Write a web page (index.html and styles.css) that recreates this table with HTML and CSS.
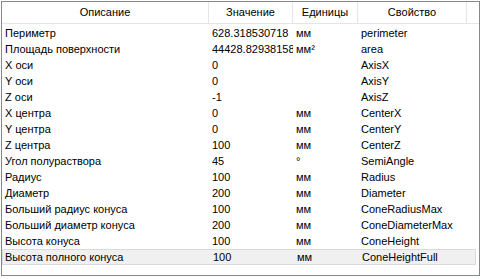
FILE: index.html
```html
<!DOCTYPE html>
<html>
<head>
<meta charset="utf-8">
<link rel="stylesheet" href="styles.css">
</head>
<body>
<div class="frame">
  <div class="head">
    <div class="hc">Описание</div>
    <div class="hc">Значение</div>
    <div class="hc">Единицы</div>
    <div class="hc">Свойство</div>
    <div class="hc filler"></div>
  </div>
  <div class="rows">
    <div class="row"><div class="c">Периметр</div><div class="c">628.318530718</div><div class="c">мм</div><div class="c">perimeter</div></div>
    <div class="row"><div class="c">Площадь поверхности</div><div class="c">44428.82938158</div><div class="c">мм²</div><div class="c">area</div></div>
    <div class="row"><div class="c">X оси</div><div class="c">0</div><div class="c"></div><div class="c">AxisX</div></div>
    <div class="row"><div class="c">Y оси</div><div class="c">0</div><div class="c"></div><div class="c">AxisY</div></div>
    <div class="row"><div class="c">Z оси</div><div class="c">-1</div><div class="c"></div><div class="c">AxisZ</div></div>
    <div class="row"><div class="c">X центра</div><div class="c">0</div><div class="c">мм</div><div class="c">CenterX</div></div>
    <div class="row"><div class="c">Y центра</div><div class="c">0</div><div class="c">мм</div><div class="c">CenterY</div></div>
    <div class="row"><div class="c">Z центра</div><div class="c">100</div><div class="c">мм</div><div class="c">CenterZ</div></div>
    <div class="row"><div class="c">Угол полураствора</div><div class="c">45</div><div class="c">°</div><div class="c">SemiAngle</div></div>
    <div class="row"><div class="c">Радиус</div><div class="c">100</div><div class="c">мм</div><div class="c">Radius</div></div>
    <div class="row"><div class="c">Диаметр</div><div class="c">200</div><div class="c">мм</div><div class="c">Diameter</div></div>
    <div class="row"><div class="c">Больший радиус конуса</div><div class="c">100</div><div class="c">мм</div><div class="c">ConeRadiusMax</div></div>
    <div class="row"><div class="c">Больший диаметр конуса</div><div class="c">200</div><div class="c">мм</div><div class="c">ConeDiameterMax</div></div>
    <div class="row"><div class="c">Высота конуса</div><div class="c">100</div><div class="c">мм</div><div class="c">ConeHeight</div></div>
    <div class="row sel"><div class="c">Высота полного конуса</div><div class="c">100</div><div class="c">мм</div><div class="c">ConeHeightFull</div></div>
  </div>
</div>
</body>
</html>
```

FILE: styles.css
```css
html, body {
  margin: 0;
  padding: 0;
  background: #ffffff;
}
body {
  padding: 1px;
  font-family: "Liberation Sans", Arial, sans-serif;
  font-size: 11px;
  color: #000;
}
.frame {
  width: 479px;
  height: 275px;
  border: 1px solid #828790;
  box-sizing: border-box;
  overflow: hidden;
}
.head {
  display: grid;
  grid-template-columns: 207px 84px 65px 109px 1fr;
  height: 22px;
  border-bottom: 1px solid #e5e5e5;
  box-sizing: border-box;
}
.hc {
  display: flex;
  align-items: center;
  justify-content: center;
  border-right: 1px solid #e5e5e5;
  padding-bottom: 1px;
}
.hc.filler {
  border-right: none;
}
.rows {
  padding-top: 1px;
}
.row {
  display: grid;
  grid-template-columns: 207px 84px 65px 109px;
  height: 16px;
  box-sizing: border-box;
  margin-right: 3px;
}
.c {
  padding-left: 3px;
  line-height: 16px;
  white-space: nowrap;
  overflow: hidden;
}
.row.sel {
  background: #f0f0f0;
  border: 1px solid #dadada;
}
.row.sel .c {
  line-height: 14px;
}
.row.sel .c:first-child {
  padding-left: 2px;
}
```
